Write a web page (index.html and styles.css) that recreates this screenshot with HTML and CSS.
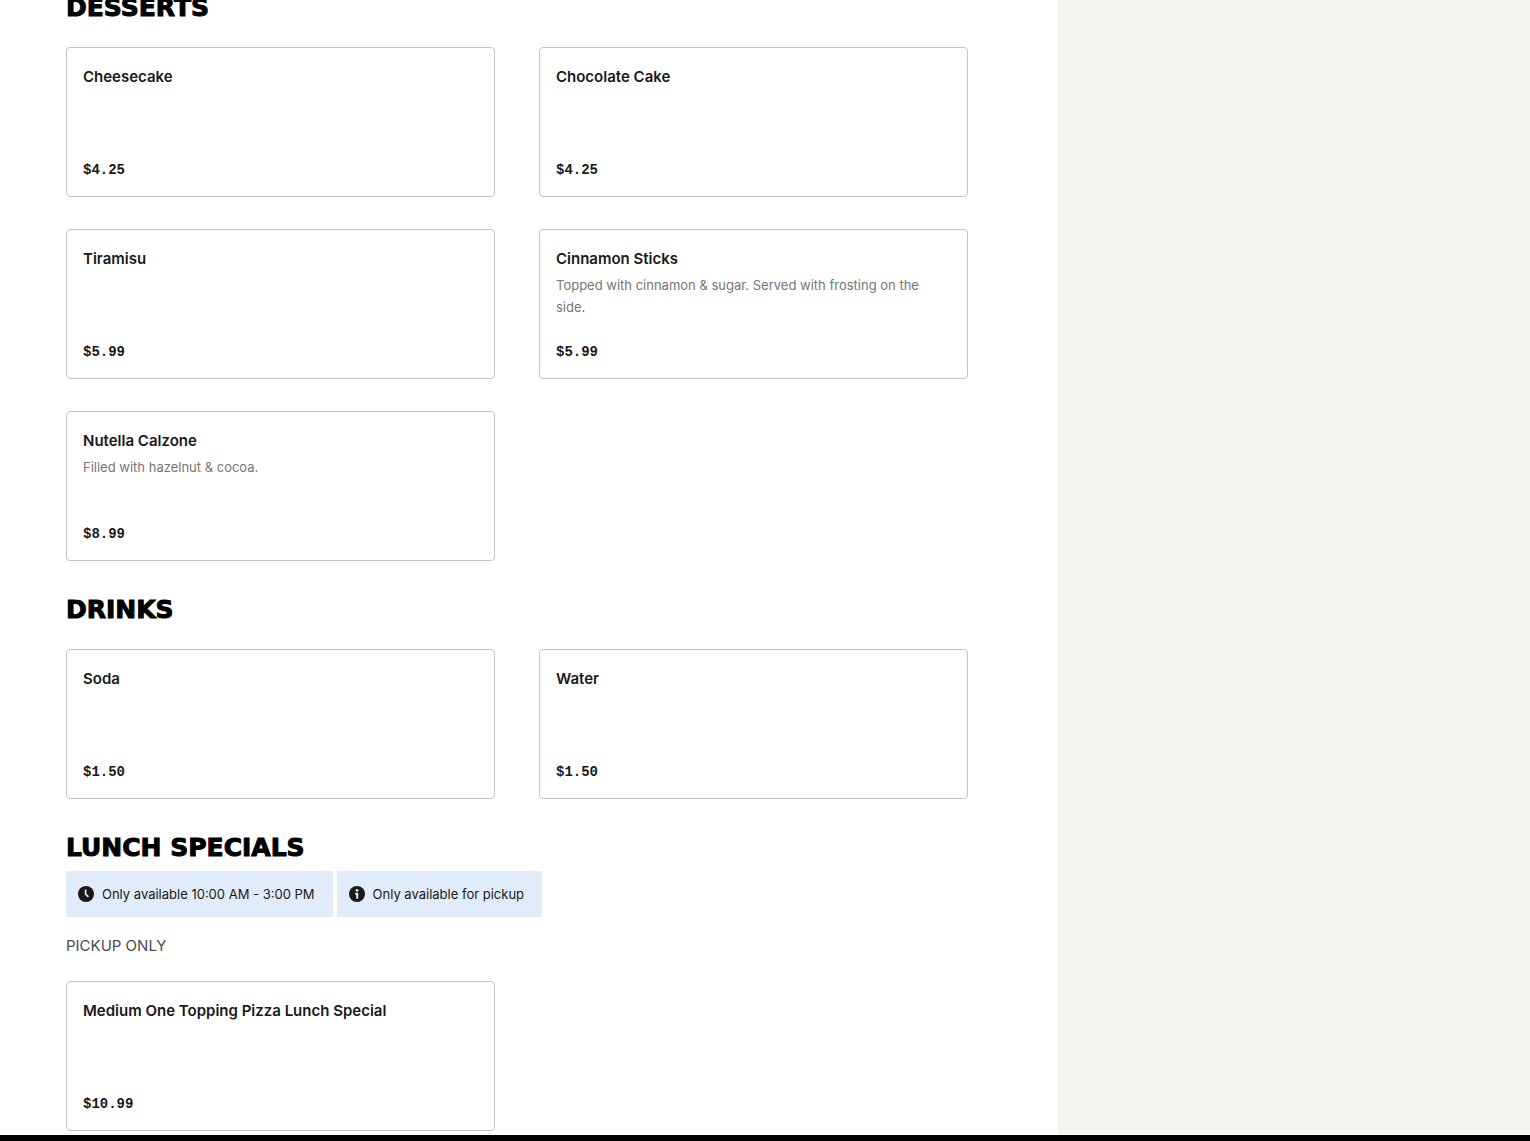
FILE: index.html
```
<!DOCTYPE html>
<html lang="en">
<head>
<meta charset="UTF-8">
<title>Menu</title>
<link rel="stylesheet" href="styles.css">
</head>
<body>
<div class="wrap">
    <main class="menu">
        <section>
            <h2>DESSERTS</h2>
            <ul class="items">
                <li><button type="button" class="card">
                    <span class="name">Cheesecake</span>
                    <span class="price">$4.25</span>
                </button></li>
                <li><button type="button" class="card">
                    <span class="name">Chocolate Cake</span>
                    <span class="price">$4.25</span>
                </button></li>
                <li><button type="button" class="card">
                    <span class="name">Tiramisu</span>
                    <span class="price">$5.99</span>
                </button></li>
                <li><button type="button" class="card">
                    <span class="name">Cinnamon Sticks</span>
                    <span class="desc">Topped with cinnamon &amp; sugar. Served with frosting on the side.</span>
                    <span class="price">$5.99</span>
                </button></li>
                <li><button type="button" class="card">
                    <span class="name">Nutella Calzone</span>
                    <span class="desc">Filled with hazelnut &amp; cocoa.</span>
                    <span class="price">$8.99</span>
                </button></li>
            </ul>
        </section>
        <section>
            <h2>DRINKS</h2>
            <ul class="items">
                <li><button type="button" class="card">
                    <span class="name">Soda</span>
                    <span class="price">$1.50</span>
                </button></li>
                <li><button type="button" class="card">
                    <span class="name">Water</span>
                    <span class="price">$1.50</span>
                </button></li>
            </ul>
        </section>
        <section>
            <h2>LUNCH SPECIALS</h2>
            <div class="notes">
                <div class="note">
                    <svg width="16" height="16" viewBox="0 0 16 16">
                        <circle cx="8" cy="8" r="8" fill="#191919"/>
                        <path d="M7.6 3.4v4.8l2.8 2.6" fill="none" stroke="#e1ecfa" stroke-width="1.7"/>
                    </svg>
                    <span>Only available 10:00 AM - 3:00 PM</span>
                </div>
                <div class="note">
                    <svg width="16" height="16" viewBox="0 0 16 16">
                        <circle cx="8" cy="8" r="8" fill="#191919"/>
                        <circle cx="8" cy="4.3" r="1.4" fill="#e1ecfa"/>
                        <path d="M6.2 7.8H8.2V12.8" fill="none" stroke="#e1ecfa" stroke-width="2"/>
                    </svg>
                    <span>Only available for pickup</span>
                </div>
            </div>
            <p class="info">PICKUP ONLY</p>
            <ul class="items">
                <li><button type="button" class="card">
                    <span class="name">Medium One Topping Pizza Lunch Special</span>
                    <span class="price">$10.99</span>
                </button></li>
            </ul>
        </section>
    </main>
    <aside class="side"></aside>
</div>
<footer class="footer"></footer>
</body>
</html>
```
FILE: styles.css
```
*{
    margin: 0;
    padding: 0;
    box-sizing: border-box;
}
body{
    font-family: Inter, "Liberation Sans", sans-serif;
    color: #191919;
    background-color: #fff;
}
.wrap{
    display: flex;
}
.menu{
    flex: 1;
    display: flex;
    flex-direction: column;
    gap: 32px;
    margin-top: -9px;
    padding: 0 90px 4px 66px;
}
.side{
    width: 472px;
    background-color: #f4f3ee;
}
h2{
    font-family: "DejaVu Sans", sans-serif;
    font-size: 25px;
    line-height: 34px;
    font-weight: bold;
    color: #000;
    -webkit-text-stroke: 1px #000;
}
.items{
    list-style: none;
    display: grid;
    grid-template-columns: 1fr 1fr;
    gap: 32px 44px;
    margin-top: 22px;
}
.card{
    display: flex;
    flex-direction: column;
    width: 100%;
    min-height: 150px;
    padding: 16px 16px 15px;
    border: 1px solid #c4c4c4;
    border-radius: 4px;
    background-color: #fff;
    font-family: inherit;
    color: #191919;
    text-align: left;
    cursor: pointer;
}
.name{
    font-size: 15px;
    line-height: 26px;
    font-weight: 600;
}
.desc{
    margin-top: 2px;
    font-size: 13px;
    line-height: 22px;
    color: #767676;
}
.price{
    margin-top: auto;
    font-family: "Liberation Mono", monospace;
    font-size: 14px;
    line-height: 22px;
    font-weight: bold;
}
.notes{
    display: flex;
    gap: 4px;
    margin-top: 6px;
}
.note{
    display: flex;
    align-items: center;
    gap: 8px;
    padding: 12px 18px 12px 12px;
    background-color: #e1ecfa;
    font-size: 13px;
    line-height: 22px;
}
.info{
    margin-top: 16px;
    font-size: 15px;
    line-height: 26px;
    color: #4c4c4c;
}
.footer{
    height: 6px;
    background-color: #000;
}
```
